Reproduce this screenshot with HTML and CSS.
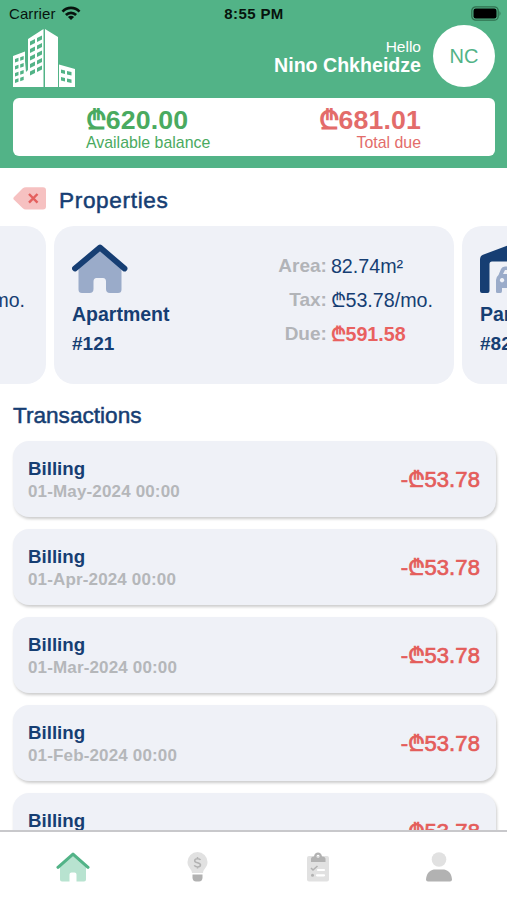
FILE: index.html
```html
<!DOCTYPE html>
<html lang="en">
<head>
<meta charset="utf-8">
<title>Properties</title>
<link rel="stylesheet" href="styles.css">
</head>
<body>
<div class="app">
  <header class="header">
    <div class="status">
      <div class="carrier">Carrier
        <svg width="20" height="15" viewBox="0 0 20 15" fill="none" stroke="#07130d" stroke-width="2.7"><path d="M1.5 5.6C6.3 .7 13.7 .7 18.5 5.6M4.9 9C7.8 6.100 12.200 6.100 15.100 9"/><path d="M10 14L6.900 11Q10 8.500 13.100 11Z" fill="#07130d" stroke="none"/></svg>
      </div>
      <div class="clock">8:55 PM</div>
      <svg class="battery" width="31" height="15" viewBox="0 0 31 15"><rect x=".8" y=".8" width="26.400" height="13.400" rx="4" fill="none" stroke="#2f704f" stroke-width="1.3"/><rect x="2.500" y="2.500" width="23" height="10" rx="2.200" fill="#000"/><path d="M28.500 5q2 2.500 0 5z" fill="#2f704f"/></svg>
    </div>
    <div class="user-row">
      <svg class="logo" width="62" height="58" viewBox="0 0 62 58">
        <path fill="#fff" d="M0 58V27L12 22.500V32L13 43L15 41V10L30.500 0V58ZM32 0L45 8V58H32ZM46 35.500L62 40V58H46Z"/>
        <g fill="#52b387">
          <path d="M17 12.500l5-2.500v4l-5 2.500zM24 9l5-2.500v4l-5 2.500zM17 20l5-2.500v4l-5 2.500zM24 16.500l5-2.500v4l-5 2.500zM17 27.500l5-2.500v4l-5 2.500zM24 24l5-2.500v4l-5 2.500zM17 35l5-2.500v4l-5 2.500zM24 31.500l5-2.500v4l-5 2.500zM17 42.500l5-2.500v4l-5 2.500zM24 39l5-2.500v4l-5 2.500z"/>
          <path d="M2 30l3.500-1.300v3.500l-3.500 1.300zM7.200 28.200l3.500-1.300v3.500l-3.500 1.300zM2 37l3.500-1.300v3.500l-3.500 1.300zM7.200 35.200l3.500-1.300v3.500l-3.500 1.300zM2 44l3.500-1.300v3.500l-3.500 1.300zM7.200 42.200l3.500-1.300v3.500l-3.500 1.300zM2 50.500l3.500-1.300v3.500l-3.500 1.300zM7.200 48.700l3.500-1.300v3.500l-3.500 1.300z"/>
          <path d="M48 40.500l4 1v3.500l-4-1zM54 42l4.500 1v3.500l-4.500-1zM48 48l4 1v3.500l-4-1zM54 49.500l4.500 1v3.500l-4.500-1z"/>
        </g>
      </svg>
      <div class="greeting"><div class="hello">Hello</div><div class="name">Nino Chkheidze</div></div>
      <div class="avatar">NC</div>
    </div>
    <div class="balance">
      <div class="balance-item available"><div class="sum"><span class="lari">₾</span>620.00</div><div class="caption">Available balance</div></div>
      <div class="balance-item total"><div class="sum"><span class="lari">₾</span>681.01</div><div class="caption">Total due</div></div>
    </div>
  </header>
  <main class="content">
    <div class="title-row">
      <svg width="33" height="23" viewBox="0 0 33 23"><path d="M1 10L9.500 1.500Q11 .3 13 .3H30Q33 .3 33 3.300V19.500Q33 22.500 30 22.500H13Q11 22.500 9.500 21L1 12.700Q-.3 11.400 1 10Z" fill="#f6c1c1"/><path d="M16 7L24.500 15.700M24.500 7L16 15.700" stroke="#e4605e" stroke-width="2.400"/></svg>
      <h2 class="title wide">Properties</h2>
    </div>
    <div class="carousel">
      <section class="card previous"><span>mo.</span></section>
      <section class="card">
        <div class="kind">
          <svg width="56" height="50" viewBox="0 0 56 50"><path d="M6.500 24L28 6L49.500 24V45.500Q49.500 49 46 49H38Q34 49 34 45V37.500Q34 34 31 34H24.500Q21.500 34 21.500 37.500V45Q21.500 49 17.500 49H10Q6.500 49 6.500 45.500Z" fill="#9aabc9"/><path d="M3 24.500L28 3.500L52.500 24.500" fill="none" stroke="#163e73" stroke-width="5.800" stroke-linecap="round" stroke-linejoin="round"/></svg>
          <div class="kind-name">Apartment</div><div class="number">#121</div>
        </div>
        <dl class="facts">
          <dt class="k-area">Area:</dt><dd>82.74m²</dd>
          <dt class="k-tax">Tax:</dt><dd><span class="lari">₾</span>53.78/mo.</dd>
          <dt class="k-due">Due:</dt><dd class="due"><span class="lari">₾</span>591.58</dd>
        </dl>
      </section>
      <section class="card">
        <div class="kind">
          <svg width="62" height="50" viewBox="0 0 62 50"><path d="M0 47V15.500Q0 12 3 10.700L28 1.500Q31 .3 34 1.500L59 10.700Q62 12 62 15.500V47Q62 49 60 49H55Q53 49 53 47V20Q53 17.500 50 17.500H12Q9.500 17.500 9.500 20V47Q9.500 49 7.500 49H2Q0 49 0 47Z" fill="#163e73"/><path fill-rule="evenodd" d="M16 48V36Q16 33 18.500 31L21 25Q22 22.500 25 22.500H38Q41 22.500 42 25L44.500 31Q47 33 47 36V48Q47 49 45.500 49H42.500Q41 49 41 47V44H22V47Q22 49 20.500 49H17.500Q16 49 16 48ZM23 30H40L38 26H25ZM22 34a2.200 2.200 0 1 0 .1 0ZM41 34a2.200 2.200 0 1 0 .1 0Z" fill="#9aabc9"/></svg>
          <div class="kind-name">Parking</div><div class="number">#82</div>
        </div>
      </section>
    </div>
    <h2 class="title">Transactions</h2>
    <ul class="list">
      <li class="entry"><div><div class="entry-name">Billing</div><div class="date">01-May-2024 00:00</div></div><div class="amount">-<span class="lari">₾</span>53.78</div></li>
      <li class="entry"><div><div class="entry-name">Billing</div><div class="date">01-Apr-2024 00:00</div></div><div class="amount">-<span class="lari">₾</span>53.78</div></li>
      <li class="entry"><div><div class="entry-name">Billing</div><div class="date">01-Mar-2024 00:00</div></div><div class="amount">-<span class="lari">₾</span>53.78</div></li>
      <li class="entry"><div><div class="entry-name">Billing</div><div class="date">01-Feb-2024 00:00</div></div><div class="amount">-<span class="lari">₾</span>53.78</div></li>
      <li class="entry"><div><div class="entry-name">Billing</div><div class="date">01-Jan-2024 00:00</div></div><div class="amount">-<span class="lari">₾</span>53.78</div></li>
    </ul>
  </main>
  <nav class="tabs">
    <svg width="34" height="30" viewBox="0 0 34 30"><path d="M4 14L17 3L30 14V27.500Q30 29.500 28 29.500H20.500V22.500Q20.500 20.500 18.500 20.500H15.500Q13.500 20.500 13.500 22.500V29.500H6Q4 29.500 4 27.500Z" fill="#b8e3d0"/><path d="M2 15.300L17 2.200L32 15.300" fill="none" stroke="#52b387" stroke-width="3.100" stroke-linecap="round" stroke-linejoin="round"/></svg>
    <svg width="21" height="30" viewBox="0 0 21 30"><path d="M5 21C4.800 17 .5 15.500 .5 10A10 10 0 0 1 20.500 10C20.500 15.500 16.200 17 16 21Z" fill="#e1e1e1"/><path d="M5.500 22.500H15.500V26Q15 29.500 12 29.500H9Q6 29.500 5.500 26Z" fill="#b2b2b2"/><path d="M13.500 8C12.800 6.300 7.800 6 7.700 8.700C7.700 11.500 13.500 10 13.500 13C13.400 15.600 8 15.300 7.300 13.300M10.500 5V7M10.500 14.500V16.500" fill="none" stroke="#b2b2b2" stroke-width="1.500"/></svg>
    <svg width="22" height="30" viewBox="0 0 22 30"><rect y="4" width="22" height="25.500" rx="2" fill="#e1e1e1"/><path fill-rule="evenodd" d="M4 10V7Q4 4.500 7 4.500C7.500-1 14.500-1 15 4.500Q18.500 4.500 18.500 7V10ZM11 2.800a1.600 1.600 0 1 0 .1 0Z" fill="#b2b2b2"/><path d="M4 16L6 18L10.500 14" fill="none" stroke="#b2b2b2" stroke-width="1.600"/><circle cx="5.500" cy="23.300" r="1.500" fill="#b2b2b2"/><path d="M11 18H17M10 23.300H17" stroke="#fff" stroke-width="2.200" stroke-linecap="round"/></svg>
    <svg width="26" height="30" viewBox="0 0 26 30"><circle cx="13" cy="7.500" r="7.300" fill="#e1e1e1"/><path d="M0 27.500C.5 20 5 17.500 9.500 17.500H16.500C21 17.500 25.500 20 26 27.500Q26 29.500 24 29.500H2Q0 29.500 0 27.500Z" fill="#b2b2b2"/></svg>
  </nav>
</div>
</body>
</html>
```
FILE: styles.css
```css
* { box-sizing: border-box; margin: 0; padding: 0; }
body { width: 507px; height: 900px; overflow: hidden; background: #fff; font-family: "Liberation Sans", "DejaVu Sans", sans-serif; color: #163e73; }
.app { display: flex; flex-direction: column; height: 900px; }
svg { display: block; flex: none; }
.lari { display: inline-block; width: .74em; line-height: 1; font-family: "DejaVu Sans", sans-serif; text-align: center; }

.header { flex: none; height: 168px; background: #52b387; padding: 0 12px 0 13px; }
.status { display: grid; grid-template-columns: 1fr auto 1fr; align-items: center; height: 25px; padding-top: 2px; margin: 0 -8px 0 -4px; color: #07130d; }
.carrier { display: flex; align-items: center; gap: 5px; font-size: 15px; line-height: 20px; letter-spacing: .1px; }
.clock { font-size: 15px; font-weight: bold; letter-spacing: .4px; margin-left: -4px; }
.battery { justify-self: end; margin-right: 1px; }
.user-row { display: flex; height: 62px; color: #fff; }
.logo { margin-top: 4px; }
.greeting { margin-left: auto; padding-top: 13px; text-align: right; }
.hello { font-size: 15.500px; line-height: 18px; }
.name { font-size: 19.600px; line-height: 19px; font-weight: bold; }
.avatar { width: 62px; height: 62px; margin-left: 12px; border-radius: 50%; background: #fff; color: #52b387; font-size: 20px; line-height: 63px; text-align: center; }
.balance { display: flex; justify-content: space-between; height: 58px; margin-top: 11px; padding: 9px 74px 0 73px; background: #fff; border-radius: 6px; }
.sum { font-size: 26.700px; line-height: 27px; font-weight: bold; letter-spacing: .15px; }
.caption { font-size: 15.900px; line-height: 18px; }
.available { color: #4aaa60; }
.total { color: #e36c6a; text-align: right; }

.content { flex: 1; min-height: 0; overflow: hidden; }
.title-row { display: flex; align-items: center; gap: 13px; height: 58px; padding: 7px 13px 0; }
.title-row svg { margin-top: -4px; }
.title { font-size: 22.600px; line-height: 28px; font-weight: normal; -webkit-text-stroke: .5px; padding-left: 13px; }
.title.wide { padding: 0; letter-spacing: .65px; }
.carousel { display: flex; gap: 8px; width: 862px; margin-left: -354px; height: 158px; }
.card { flex: none; display: flex; justify-content: space-between; width: 400px; height: 158px; padding: 18px 21px 0 18px; border-radius: 20px; background: #eff1f7; font-size: 19.500px; }
.previous { justify-content: flex-end; line-height: 112px; }
.kind-name { margin-top: 6px; line-height: 29px; font-weight: bold; }
.number { line-height: 29px; font-weight: bold; font-size: 19px; }
.facts { display: grid; grid-template-columns: auto auto; column-gap: 4px; grid-auto-rows: 34px; align-content: start; padding-top: 5px; line-height: 34px; }
.facts dt { font-size: 19px; font-weight: bold; text-align: right; color: #b2b4b8; }
.facts dd { font-size: 19.700px; }
.due { color: #e9615f; font-weight: bold; }
.carousel + .title { margin-top: 18px; }
.list { list-style: none; display: grid; gap: 12px; margin-top: 11px; padding: 0 11px 0 13px; }
.entry { display: flex; justify-content: space-between; height: 76px; padding: 16px 16px 0 15px; border-radius: 16px; background: #eff1f7; box-shadow: 1px 2px 3px rgba(0, 0, 0, .2); }
.entry-name { font-size: 18.700px; line-height: 23px; font-weight: bold; }
.date { font-size: 17px; line-height: 23px; font-weight: bold; color: #b5b7ba; letter-spacing: .15px; }
.amount { font-size: 22px; line-height: 45px; color: #e45d5b; -webkit-text-stroke: .7px; letter-spacing: .1px; }

.tabs { flex: none; display: grid; grid-template-columns: 145px 105px 135px 108px; justify-items: center; height: 70px; padding-top: 20px; border-top: 2px solid #c8c8cb; background: #fff; }
```
